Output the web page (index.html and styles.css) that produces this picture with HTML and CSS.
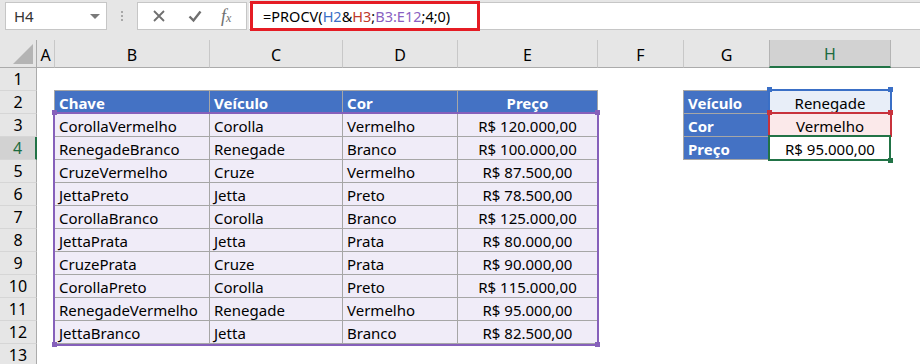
FILE: index.html
```html
<html>
<head>
    <title>PROCV com duas condições</title>
    <link rel="stylesheet" href="styles.css">
</head>
<body>
    <div class="toolbar">
        <div class="namebox">
            <span>H4</span>
            <span class="caret"></span>
        </div>
        <div class="grip"><i></i><i></i><i></i></div>
        <div class="buttons">
            <svg class="btn-icon" viewBox="0 0 14 14">
                <path d="M2 2 L12 12 M12 2 L2 12" stroke="#6f6f6f" stroke-width="1.8" fill="none"/>
            </svg>
            <svg class="btn-icon" viewBox="0 0 14 14">
                <path d="M1.5 7.5 L5.5 11.5 L12.5 2.5" stroke="#6f6f6f" stroke-width="2.4" fill="none"/>
            </svg>
            <span class="fx">f<small>x</small></span>
        </div>
        <div class="formula">
            <span class="formula-text">=PROCV(<span class="ref-blue">H2</span>&amp;<span class="ref-red">H3</span>;<span class="ref-purple">B3:E12</span>;4;0)</span>
            <!-- red annotation box -->
            <div class="highlight"></div>
        </div>
    </div>

    <div class="sheet">
        <div class="corner"><span class="corner-tri"></span></div>
        <div class="col-heads">
            <div>A</div>
            <div>B</div>
            <div>C</div>
            <div>D</div>
            <div>E</div>
            <div>F</div>
            <div>G</div>
            <div class="active">H</div>
            <div class="last"></div>
        </div>
        <div class="row-heads">
            <div>1</div>
            <div>2</div>
            <div>3</div>
            <div class="active">4</div>
            <div>5</div>
            <div>6</div>
            <div>7</div>
            <div>8</div>
            <div>9</div>
            <div>10</div>
            <div>11</div>
            <div>12</div>
            <div>13</div>
        </div>
        <div class="cells">
            <div class="table">
                <div class="th">Chave</div>
                <div class="th">Veículo</div>
                <div class="th">Cor</div>
                <div class="th center">Preço</div>

                <div class="td">CorollaVermelho</div><div class="td">Corolla</div><div class="td">Vermelho</div><div class="td center">R$ 120.000,00</div>
                <div class="td">RenegadeBranco</div><div class="td">Renegade</div><div class="td">Branco</div><div class="td center">R$ 100.000,00</div>
                <div class="td">CruzeVermelho</div><div class="td">Cruze</div><div class="td">Vermelho</div><div class="td center">R$ 87.500,00</div>
                <div class="td">JettaPreto</div><div class="td">Jetta</div><div class="td">Preto</div><div class="td center">R$ 78.500,00</div>
                <div class="td">CorollaBranco</div><div class="td">Corolla</div><div class="td">Branco</div><div class="td center">R$ 125.000,00</div>
                <div class="td">JettaPrata</div><div class="td">Jetta</div><div class="td">Prata</div><div class="td center">R$ 80.000,00</div>
                <div class="td">CruzePrata</div><div class="td">Cruze</div><div class="td">Prata</div><div class="td center">R$ 90.000,00</div>
                <div class="td">CorollaPreto</div><div class="td">Corolla</div><div class="td">Preto</div><div class="td center">R$ 115.000,00</div>
                <div class="td">RenegadeVermelho</div><div class="td">Renegade</div><div class="td">Vermelho</div><div class="td center">R$ 95.000,00</div>
                <div class="td">JettaBranco</div><div class="td">Jetta</div><div class="td">Branco</div><div class="td center">R$ 82.500,00</div>

                <!-- B3:E12 reference -->
                <div class="range">
                    <i class="handle tl"></i><i class="handle tr"></i>
                    <i class="handle bl"></i><i class="handle br"></i>
                </div>
            </div>

            <div class="lookup">
                <div class="th">Veículo</div>
                <div class="val ref-h2">Renegade
                    <div class="mark"><i class="handle tl"></i><i class="handle tr"></i></div>
                </div>
                <div class="th">Cor</div>
                <div class="val ref-h3">Vermelho
                    <div class="mark"><i class="handle tl"></i><i class="handle tr"></i></div>
                </div>
                <div class="th">Preço</div>
                <div class="val current">R$ 95.000,00
                    <div class="mark"><i class="handle br"></i></div>
                </div>
            </div>
        </div>
    </div>
</body>
</html>
```

FILE: styles.css
```css
body {
    margin: 0;
    width: 920px;
    height: 364px;
    overflow: hidden;
    font-family: "Noto Sans", "Open Sans", sans-serif;
    color: #000;
    background-color: #fff;
}
/* Formula bar */
.toolbar {
    display: flex;
    align-items: flex-start;
    height: 40px;
    box-sizing: border-box;
    padding: 2px 0 0 5px;
    background-color: #e6e6e6;
}
.namebox {
    display: flex;
    align-items: center;
    justify-content: space-between;
    width: 102px;
    height: 28px;
    box-sizing: border-box;
    padding: 0 6px 0 8px;
    border: 1px solid #c6c6c6;
    background-color: #fff;
    font-size: 15px;
    color: #333;
}
.caret {
    width: 0;
    height: 0;
    border-left: 5px solid transparent;
    border-right: 5px solid transparent;
    border-top: 5px solid #7a7a7a;
}
.grip {
    display: flex;
    flex-direction: column;
    align-items: center;
    gap: 2px;
    width: 30px;
    padding-top: 9px;
}
.grip i {
    width: 2px;
    height: 2px;
    background-color: #a8a8a8;
}
.buttons {
    display: flex;
    align-items: center;
    width: 110px;
    height: 28px;
    box-sizing: border-box;
    padding-left: 14px;
    gap: 22px;
    border: 1px solid #c6c6c6;
    background-color: #fff;
}
.btn-icon {
    width: 14px;
    height: 14px;
}
.fx {
    font-family: "Liberation Serif", serif;
    font-style: italic;
    font-size: 18px;
    color: #6f6f6f;
    margin-left: -3px;
}
.fx small {
    font-size: 12px;
}
.formula {
    position: relative;
    flex: 1;
    display: flex;
    align-items: center;
    height: 28px;
    box-sizing: border-box;
    margin-left: 2px;
    padding-left: 14px;
    border-top: 1px solid #c6c6c6;
    border-bottom: 1px solid #c6c6c6;
    background-color: #fff;
    font-size: 14.5px;
}
.highlight {
    position: absolute;
    left: 1px;
    top: -2px;
    width: 230px;
    height: 30px;
    box-sizing: border-box;
    border: 3px solid #e51c24;
}
.ref-blue { color: #3a6fc6; }
.ref-red { color: #c0392b; }
.ref-purple { color: #8a5fc2; }

/* Sheet */
.sheet {
    display: grid;
    grid-template-columns: 37px 1fr;
    grid-template-rows: 28px 1fr;
    font-size: 15px;
}
.corner {
    display: flex;
    justify-content: flex-end;
    align-items: flex-end;
    padding: 0 3px 3px 0;
    box-sizing: border-box;
    background-color: #e6e6e6;
    border-right: 1px solid #ababab;
    border-bottom: 1px solid #ababab;
}
.corner-tri {
    width: 0;
    height: 0;
    border-left: 20px solid transparent;
    border-bottom: 20px solid #b4b4b4;
}
.col-heads {
    display: grid;
    grid-template-columns: 18px 155px 133px 115px 140px 86px 86px 121px 1fr;
    background-color: #e6e6e6;
}
.col-heads div {
    display: flex;
    align-items: center;
    justify-content: center;
    box-sizing: border-box;
    height: 28px;
    padding-top: 2px;
    border-right: 1px solid #c8c8c8;
    border-bottom: 1px solid #ababab;
    font-size: 16px;
}
.col-heads .active {
    background-color: #d2d2d2;
    color: #1d6b40;
    border-right-color: #b4b4b4;
    border-bottom: 2px solid #217346;
    margin-left: -1px;
    border-left: 1px solid #b4b4b4;
}
.col-heads .last {
    border-right: none;
}
.row-heads {
    display: grid;
    grid-template-rows: repeat(13, 23px);
    background-color: #e6e6e6;
}
.row-heads div {
    display: flex;
    align-items: center;
    justify-content: center;
    box-sizing: border-box;
    border-right: 1px solid #ababab;
    border-bottom: 1px solid #d6d6d6;
    font-size: 16px;
}
.row-heads .active {
    background-color: #d2d2d2;
    color: #1d6b40;
    border-right: 2px solid #217346;
}
.cells {
    display: grid;
    grid-template-columns: 18px 155px 133px 115px 140px 86px 86px 121px 1fr;
    grid-template-rows: repeat(13, 23px);
}

/* Data table B2:E12 */
.table {
    position: relative;
    grid-column: 2 / 6;
    grid-row: 2 / 13;
    display: grid;
    grid-template-columns: 155px 133px 115px 140px;
    grid-auto-rows: 23px;
    align-self: start;
    justify-self: start;
    margin: -1px 0 0 -1px;
    border-left: 1px solid #a6a6a6;
    border-top: 1px solid #a6a6a6;
}
.th, .td, .val {
    display: flex;
    align-items: center;
    box-sizing: border-box;
    padding: 1px 0 0 4px;
    border-right: 1px solid #a6a6a6;
    border-bottom: 1px solid #a6a6a6;
    white-space: nowrap;
}
.th {
    background-color: #4472c4;
    color: #fff;
    font-weight: bold;
}
.td {
    background-color: #f0ecf8;
}
.center {
    justify-content: center;
    padding-left: 0;
}
.range {
    position: absolute;
    left: -2px;
    top: 21px;
    right: -1px;
    bottom: -2px;
    border: 2px solid #8660bb;
}
.handle {
    position: absolute;
    width: 5px;
    height: 5px;
    background-color: #8660bb;
}
.handle.tl { left: -3px; top: -4px; }
.handle.tr { right: -3px; top: -4px; }
.handle.bl { left: -3px; bottom: -3px; }
.handle.br { right: -3px; bottom: -3px; }

/* Lookup G2:H4 */
.lookup {
    grid-column: 7 / 9;
    grid-row: 2 / 5;
    display: grid;
    grid-template-columns: 86px 121px;
    grid-auto-rows: 23px;
    align-self: start;
    justify-self: start;
    margin: -1px 0 0 -1px;
    border-left: 1px solid #a6a6a6;
    border-top: 1px solid #a6a6a6;
}
.val {
    position: relative;
    justify-content: center;
    padding-left: 0;
}
.mark {
    position: absolute;
    left: -2px;
    top: -2px;
    right: -2px;
    bottom: -1px;
    border: 2px solid;
}
.ref-h2 { background-color: #e8eef8; }
.ref-h2 .mark { border-color: #3a6fc6; }
.ref-h2 .handle { background-color: #3a6fc6; }
.ref-h3 { background-color: #fbe9ea; }
.ref-h3 .mark { border-color: #c8323c; }
.ref-h3 .handle { background-color: #c8323c; }
.current { background-color: #fff; }
.current .mark {
    right: -1px;
    bottom: -2px;
    border-color: #217346;
}
.current .handle {
    background-color: #217346;
    right: -4px;
    bottom: -4px;
}
```
